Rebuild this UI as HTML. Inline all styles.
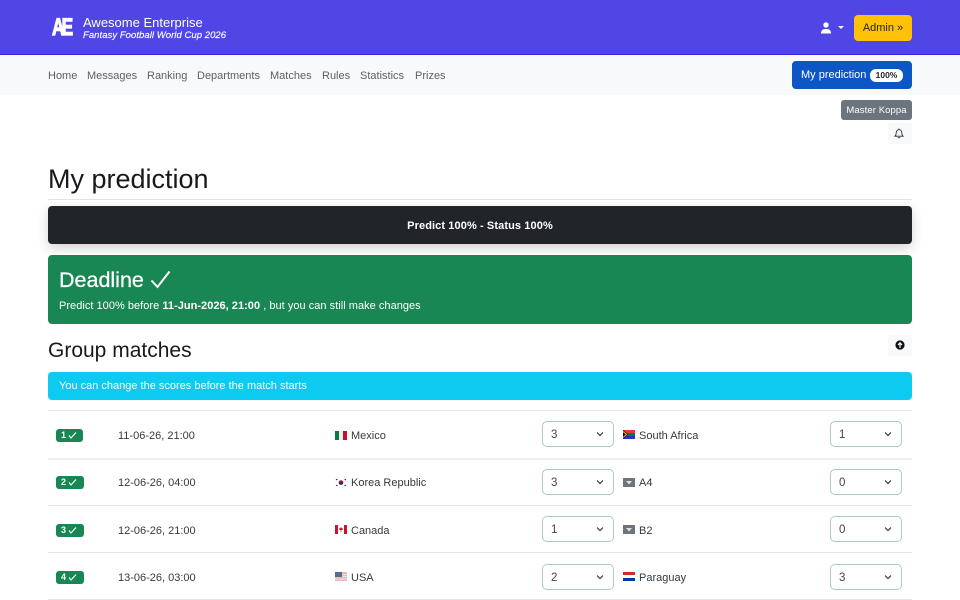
<!DOCTYPE html>
<html><head><meta charset="utf-8">
<style>
*{box-sizing:border-box;margin:0;padding:0}
html,body{width:960px;height:600px;overflow:hidden;background:#fff}
body{position:relative;font-family:"Liberation Sans",sans-serif;color:#212529}
.a{position:absolute;white-space:nowrap}
.t{position:absolute;white-space:nowrap;font-size:11px;line-height:14px;color:#343a40;margin-top:1px}
.n{top:68px;color:#5c6166}
.row{position:absolute;left:48px;width:864px;height:1px;background:#e6e7e9}
.bd{position:absolute;left:56px;width:27px;height:13px;background:#198754;border-radius:3px;color:#fff;font-size:9px;font-weight:bold;line-height:13px;padding-left:5px}
.bd svg{position:absolute;left:10px;top:2px}
.sel{position:absolute;width:72px;height:26px;border:1px solid #a9cdb9;border-radius:5px;font-size:11.500px;line-height:26px;padding-left:8px;color:#444;background:#fff}
.sel svg{position:absolute;right:8px;top:9px}
.f{position:absolute;width:12px;height:9px;overflow:hidden}
</style></head><body>
<div class="a" style="left:0;top:0;width:960px;height:55px;background:#4f46e5;border-bottom:1px solid #3d1de8"></div>
<div class="a" style="left:52px;top:17px;color:#fff;font-size:24px;font-weight:bold;letter-spacing:-4px;line-height:22px;transform:scaleX(.72);transform-origin:left;-webkit-text-stroke:1.200px #fff">AE</div>
<div class="a" style="left:83px;top:15px;color:#fff;font-size:13px;line-height:16px">Awesome Enterprise</div>
<div class="a" style="left:83px;top:30px;color:#fff;font-size:9.500px;line-height:12px;font-style:italic;letter-spacing:.05px;-webkit-text-stroke:.15px #fff">Fantasy Football World Cup 2026</div>
<svg class="a" style="left:820px;top:22px" width="12" height="12" viewBox="0 0 12 12"><circle cx="6" cy="3" r="2.700" fill="#fff"/><path d="M1 11.500C1 8 3 7 6 7s5 1 5 4.500z" fill="#fff"/></svg>
<div class="a" style="left:838px;top:26px;width:0;height:0;border:3px solid transparent;border-top:3.500px solid #fff;border-bottom:0"></div>
<div class="a" style="left:854px;top:15px;width:58px;height:26px;background:#ffc107;border-radius:4px;font-size:11px;line-height:27px;text-align:center;color:#212529">Admin »</div>

<div class="a" style="left:0;top:55px;width:960px;height:40px;background:#f8f9fa"></div>
<div class="t n" style="left:48px">Home</div>
<div class="t n" style="left:87px">Messages</div>
<div class="t n" style="left:147px">Ranking</div>
<div class="t n" style="left:197px">Departments</div>
<div class="t n" style="left:270px">Matches</div>
<div class="t n" style="left:322px">Rules</div>
<div class="t n" style="left:360px">Statistics</div>
<div class="t n" style="left:415px">Prizes</div>
<div class="a" style="left:792px;top:61px;width:120px;height:28px;background:#0d56c6;border-radius:4px;color:#fff;font-size:11px;line-height:29px;padding-left:9px">My prediction</div>
<div class="a" style="left:870px;top:69px;width:33px;height:13px;background:#fff;border-radius:6px;color:#212529;font-size:8.500px;font-weight:bold;line-height:13px;text-align:center">100%</div>
<div class="a" style="left:841px;top:100px;width:71px;height:20px;background:#6c757d;border-radius:3px;color:#fff;font-size:9.500px;line-height:21px;text-align:center;letter-spacing:.1px">Master Koppa</div>
<div class="a" style="left:888px;top:123px;width:24px;height:21px;background:#f8f9fa;border-radius:3px"></div>
<svg class="a" style="left:894px;top:128px" width="10" height="11" viewBox="0 0 10 11" fill="none" stroke="#212529" stroke-width=".8"><path d="M1 8.200c.9-.8 1.200-1.600 1.200-3.400C2.200 3 3.400 1.600 5 1.600S7.800 3 7.800 4.800c0 1.800.3 2.600 1.200 3.400z"/><path d="M4 9.300c.3.8 1.700.8 2 0M5 .5v1"/></svg>

<div class="a" style="left:48px;top:164px;font-size:27px;line-height:31px;color:#17191c">My prediction</div>
<div class="a" style="left:48px;top:199px;width:864px;height:1px;background:#e3e4e6"></div>
<div class="a" style="left:48px;top:206px;width:864px;height:38px;background:#212529;border-radius:4px;box-shadow:0 4px 12px rgba(0,0,0,.18);color:#fff;font-size:11px;font-weight:bold;line-height:40px;text-align:center;letter-spacing:.1px">Predict 100% - Status 100%</div>

<div class="a" style="left:48px;top:255px;width:864px;height:69px;background:#198754;border-radius:4px"></div>
<div class="a" style="left:59px;top:266px;color:#fff;font-size:21.500px;line-height:28px;-webkit-text-stroke:.25px #fff">Deadline</div>
<svg class="a" style="left:149px;top:269px" width="23" height="22" viewBox="0 0 23 22" fill="none" stroke="#fff" stroke-width="2"><path d="M2.500 11.500l6 6.500L20.500 2.500"/></svg>
<div class="a" style="left:59px;top:299px;color:#fff;font-size:11px;line-height:14px;letter-spacing:.03px">Predict 100% before <b>11-Jun-2026, 21:00</b> , but you can still make changes</div>

<div class="a" style="left:48px;top:338px;font-size:21px;line-height:25px;color:#17191c">Group matches</div>
<div class="a" style="left:888px;top:335px;width:24px;height:21px;background:#f8f9fa;border-radius:3px"></div>
<svg class="a" style="left:895px;top:340px" width="10" height="10" viewBox="0 0 10 10"><circle cx="5" cy="5" r="4.600" fill="#111"/><path d="M5 8V3M3 5l2-2.200L7 5" fill="none" stroke="#fff" stroke-width="1.200"/></svg>
<div class="a" style="left:48px;top:372px;width:864px;height:28px;background:#0dcaf0;border-radius:4px;color:#fff;font-size:11px;line-height:28px;padding-left:11px">You can change the scores before the match starts</div>

<div class="row" style="top:410px"></div>
<div class="row" style="top:458px;height:2px;background:#f0f0f0"></div>
<div class="row" style="top:505px"></div>
<div class="row" style="top:552px"></div>
<div class="row" style="top:599px"></div>

<!-- row 1 -->
<div class="bd" style="top:429px">1<svg width="13" height="9" viewBox="0 0 13 9" fill="none" stroke="#fff" stroke-width="1.100"><path d="M3 4.500l2 2.500L10 1.500"/></svg></div>
<div class="t" style="left:118px;top:428px">11-06-26, 21:00</div>
<div class="f" style="left:335px;top:431px;background:linear-gradient(90deg,#0a7a3e 33%,#eee 33% 66%,#c8102e 66%)"></div>
<div class="t" style="left:351px;top:428px">Mexico</div>
<div class="sel" style="left:542px;top:421px">3<svg width="10" height="7" viewBox="0 0 10 7" fill="none" stroke="#343a40" stroke-width="1.200"><path d="M2 1.500L5 4.500l3-3"/></svg></div>
<svg class="f" style="left:623px;top:430px" viewBox="0 0 12 9"><rect width="12" height="3" fill="#e03c31"/><rect y="3" width="12" height="3" fill="#007749"/><rect y="6" width="12" height="3" fill="#2335c8"/><path d="M0 0l5 4.500L0 9z" fill="#111"/><path d="M0 1.500l3.500 3L0 7.500" fill="none" stroke="#ffb81c"/></svg>
<div class="t" style="left:639px;top:428px">South Africa</div>
<div class="sel" style="left:830px;top:421px">1<svg width="10" height="7" viewBox="0 0 10 7" fill="none" stroke="#343a40" stroke-width="1.200"><path d="M2 1.500L5 4.500l3-3"/></svg></div>

<!-- row 2 -->
<div class="bd" style="top:476px;width:28px">2<svg width="13" height="9" viewBox="0 0 13 9" fill="none" stroke="#fff" stroke-width="1.100"><path d="M3 4.500l2 2.500L10 1.500"/></svg></div>
<div class="t" style="left:118px;top:475px">12-06-26, 04:00</div>
<svg class="f" style="left:335px;top:478px" viewBox="0 0 12 9"><rect width="12" height="9" fill="#fff"/><circle cx="6" cy="4.500" r="2.300" fill="#c60c30"/><path d="M3.700 4.500a2.300 2.300 0 0 0 4.600 0z" fill="#003478"/><path d="M1 2l1.500-1M9.500 1L11 2M1 7l1.500 1M9.500 8L11 7" stroke="#222" stroke-width="1"/></svg>
<div class="t" style="left:351px;top:475px">Korea Republic</div>
<div class="sel" style="left:542px;top:469px">3<svg width="10" height="7" viewBox="0 0 10 7" fill="none" stroke="#343a40" stroke-width="1.200"><path d="M2 1.500L5 4.500l3-3"/></svg></div>
<svg class="f" style="left:623px;top:478px" viewBox="0 0 12 9"><rect width="12" height="9" fill="#6c757d"/><path d="M3 3h6L6 6.500z" fill="#dfe1e3"/></svg>
<div class="t" style="left:639px;top:475px">A4</div>
<div class="sel" style="left:830px;top:469px">0<svg width="10" height="7" viewBox="0 0 10 7" fill="none" stroke="#343a40" stroke-width="1.200"><path d="M2 1.500L5 4.500l3-3"/></svg></div>

<!-- row 3 -->
<div class="bd" style="top:524px;width:28px">3<svg width="13" height="9" viewBox="0 0 13 9" fill="none" stroke="#fff" stroke-width="1.100"><path d="M3 4.500l2 2.500L10 1.500"/></svg></div>
<div class="t" style="left:118px;top:523px">12-06-26, 21:00</div>
<svg class="f" style="left:335px;top:525px" viewBox="0 0 12 9"><rect width="12" height="9" fill="#fff"/><rect width="3" height="9" fill="#d0102a"/><rect x="9" width="3" height="9" fill="#d0102a"/><path d="M6 2l1 1.500 1-.3-.4 1.800H4.400L4 3.200l1 .3z M5.700 5h.6v2h-.6z" fill="#d0102a"/></svg>
<div class="t" style="left:351px;top:523px">Canada</div>
<div class="sel" style="left:542px;top:516px">1<svg width="10" height="7" viewBox="0 0 10 7" fill="none" stroke="#343a40" stroke-width="1.200"><path d="M2 1.500L5 4.500l3-3"/></svg></div>
<svg class="f" style="left:623px;top:525px" viewBox="0 0 12 9"><rect width="12" height="9" fill="#6c757d"/><path d="M3 3h6L6 6.500z" fill="#dfe1e3"/></svg>
<div class="t" style="left:639px;top:523px">B2</div>
<div class="sel" style="left:830px;top:516px">0<svg width="10" height="7" viewBox="0 0 10 7" fill="none" stroke="#343a40" stroke-width="1.200"><path d="M2 1.500L5 4.500l3-3"/></svg></div>

<!-- row 4 -->
<div class="bd" style="top:571px;width:28px">4<svg width="13" height="9" viewBox="0 0 13 9" fill="none" stroke="#fff" stroke-width="1.100"><path d="M3 4.500l2 2.500L10 1.500"/></svg></div>
<div class="t" style="left:118px;top:570px">13-06-26, 03:00</div>
<svg class="f" style="left:335px;top:572px" viewBox="0 0 12 9"><rect width="12" height="9" fill="#e6b8bc"/><rect y="2" width="12" height="1" fill="#f3dfe0"/><rect y="4" width="12" height="1" fill="#f3dfe0"/><rect y="6.500" width="12" height="1" fill="#f3dfe0"/><rect width="7" height="5" fill="#5b6b90"/></svg>
<div class="t" style="left:351px;top:570px">USA</div>
<div class="sel" style="left:542px;top:564px">2<svg width="10" height="7" viewBox="0 0 10 7" fill="none" stroke="#343a40" stroke-width="1.200"><path d="M2 1.500L5 4.500l3-3"/></svg></div>
<svg class="f" style="left:623px;top:572px" viewBox="0 0 12 9"><rect width="12" height="3" fill="#d52b1e"/><rect y="3" width="12" height="3" fill="#fff"/><rect y="6" width="12" height="3" fill="#0038a8"/></svg>
<div class="t" style="left:639px;top:570px">Paraguay</div>
<div class="sel" style="left:830px;top:564px">3<svg width="10" height="7" viewBox="0 0 10 7" fill="none" stroke="#343a40" stroke-width="1.200"><path d="M2 1.500L5 4.500l3-3"/></svg></div>
</body></html>
